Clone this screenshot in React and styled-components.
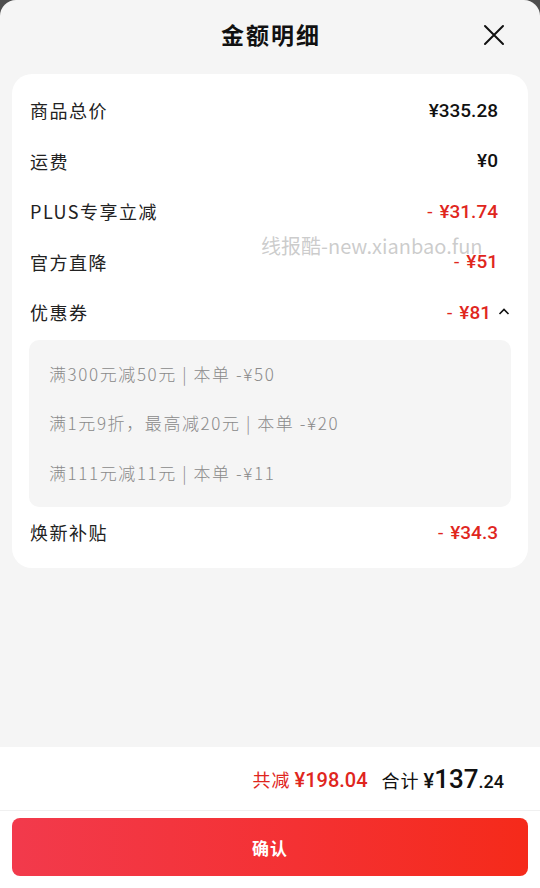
import React from 'react';
import styled, { createGlobalStyle } from 'styled-components';

const GlobalStyle = createGlobalStyle`
  html, body {
    margin: 0;
    padding: 0;
    background: #4d4d4d;
  }
  * {
    box-sizing: border-box;
  }
`;

const Sheet = styled.div`
  position: relative;
  width: 540px;
  height: 888px;
  background: #f5f5f5;
  border-radius: 16px 16px 0 0;
  display: flex;
  flex-direction: column;
  font-family: Roboto, "Noto Sans CJK SC", sans-serif;
  color: #1a1a1a;
  overflow: hidden;
`;

const Header = styled.div`
  position: relative;
  height: 74px;
  display: flex;
  align-items: center;
  justify-content: center;
`;

const Title = styled.div`
  font-family: "Noto Sans CJK SC", sans-serif;
  font-size: 23px;
  font-weight: 700;
  letter-spacing: 2px;
  color: #111;
  margin-top: -6px;
  padding-left: 2px;
`;

const CloseButton = styled.button`
  position: absolute;
  right: 34px;
  top: 23px;
  width: 24px;
  height: 24px;
  padding: 0;
  border: none;
  background: none;
  display: flex;
  align-items: center;
  justify-content: center;
`;

const Card = styled.div`
  margin: 0 12px;
  background: #fff;
  border-radius: 20px;
  padding: 11px 0 10px;
  position: relative;
`;

const Row = styled.div`
  height: 50.5px;
  display: flex;
  align-items: center;
  justify-content: space-between;
  padding: 0 ${({ $caret }) => ($caret ? '17px' : '30px')} 0 18px;
`;

const Label = styled.span`
  font-family: "Noto Sans CJK SC", sans-serif;
  font-size: 18px;
  color: #222;
  letter-spacing: 1.5px;
`;

const Value = styled.span`
  display: flex;
  align-items: center;
  line-height: 1;
  font-family: Roboto, sans-serif;
  font-size: 19px;
  font-weight: 500;
  color: ${({ $red }) => ($red ? '#e0261d' : '#111')};
`;

const Minus = styled.span`
  margin-right: 7px;
  font-weight: 400;
`;

const Caret = styled.svg`
  margin-left: 6px;
`;

const CouponPanel = styled.div`
  margin: 2px 17px 0 17px;
  background: #f5f5f5;
  border-radius: 10px;
  padding: 9px 0 10px 20px;
`;

const CouponLine = styled.div`
  height: 49.5px;
  display: flex;
  align-items: center;
  font-family: "Noto Sans CJK SC", sans-serif;
  font-size: 17px;
  font-weight: 300;
  letter-spacing: 1.6px;
  color: #8a8a8a;
`;

const Watermark = styled.div`
  position: absolute;
  left: 261px;
  top: 236px;
  line-height: 1;
  font-family: "Noto Sans CJK SC", sans-serif;
  font-size: 20px;
  color: rgba(170, 170, 170, 0.6);
  white-space: nowrap;
  pointer-events: none;
`;

const Spacer = styled.div`
  flex: 1;
`;

const Footer = styled.div`
  background: #fff;
`;

const TotalBar = styled.div`
  height: 64px;
  display: flex;
  align-items: center;
  justify-content: flex-end;
  padding-right: 36px;
  border-bottom: 1px solid #f0f0f0;
`;

const Saved = styled.span`
  color: #e0261d;
  font-size: 18px;
  margin-right: 14px;
  display: flex;
  align-items: baseline;
`;

const CnText = styled.span`
  font-family: "Noto Sans CJK SC", sans-serif;
  font-size: 18px;
  letter-spacing: 1px;
  margin-right: 4px;
`;

const SavedAmount = styled.span`
  font-family: Roboto, sans-serif;
  font-weight: 500;
  font-size: 20px;
`;

const Total = styled.span`
  display: flex;
  align-items: baseline;
  color: #111;
`;

const TotalYuan = styled.span`
  font-family: Roboto, sans-serif;
  font-weight: 500;
  font-size: 20px;
`;

const TotalInt = styled.span`
  font-family: Roboto, sans-serif;
  font-weight: 500;
  font-size: 26px;
`;

const TotalDec = styled.span`
  font-family: Roboto, sans-serif;
  font-weight: 500;
  font-size: 18px;
`;

const ButtonBar = styled.div`
  padding: 7px 12px 12px;
`;

const ConfirmButton = styled.button`
  width: 100%;
  height: 58px;
  border: none;
  border-radius: 8px;
  background: linear-gradient(90deg, #f23a4c 0%, #f43133 55%, #f52a1a 100%);
  color: #fff;
  font-family: "Noto Sans CJK SC", sans-serif;
  font-size: 17px;
  font-weight: 700;
  letter-spacing: 1px;
`;

const rows = [
  { label: '商品总价', value: '¥335.28' },
  { label: '运费', value: '¥0' },
  { label: 'PLUS专享立减', value: '¥31.74', red: true },
  { label: '官方直降', value: '¥51', red: true },
];

const coupons = [
  '满300元减50元 | 本单 -¥50',
  '满1元9折，最高减20元 | 本单 -¥20',
  '满111元减11元 | 本单 -¥11',
];

const AmountValue = ({ value, red }) => (
  <Value $red={red}>
    {red && <Minus>-</Minus>}
    {value}
  </Value>
);

const App = () => (
  <>
    <GlobalStyle />
    <Sheet>
      <Header>
        <Title>金额明细</Title>
        <CloseButton aria-label="close">
          <svg width="22" height="22" viewBox="0 0 22 22">
            <path d="M2 2L20 20M20 2L2 20" stroke="#111" strokeWidth="2" strokeLinecap="round" />
          </svg>
        </CloseButton>
      </Header>
      <Card>
        {rows.map((r) => (
          <Row key={r.label}>
            <Label>{r.label}</Label>
            <AmountValue value={r.value} red={r.red} />
          </Row>
        ))}
        <Row $caret>
          <Label>优惠券</Label>
          <Value $red>
            <Minus>-</Minus>¥81
            <Caret width="14" height="14" viewBox="0 0 14 14">
              <path d="M2.5 9L7 4.5L11.5 9" fill="none" stroke="#111" strokeWidth="1.6" />
            </Caret>
          </Value>
        </Row>
        <CouponPanel>
          {coupons.map((c) => (
            <CouponLine key={c}>{c}</CouponLine>
          ))}
        </CouponPanel>
        <Row>
          <Label>焕新补贴</Label>
          <AmountValue value="¥34.3" red />
        </Row>
      </Card>
      <Watermark>线报酷-new.xianbao.fun</Watermark>
      <Spacer />
      <Footer>
        <TotalBar>
          <Saved>
            <CnText>共减</CnText>
            <SavedAmount>¥198.04</SavedAmount>
          </Saved>
          <Total>
            <CnText>合计</CnText>
            <TotalYuan>¥</TotalYuan>
            <TotalInt>137</TotalInt>
            <TotalDec>.24</TotalDec>
          </Total>
        </TotalBar>
        <ButtonBar>
          <ConfirmButton>确认</ConfirmButton>
        </ButtonBar>
      </Footer>
    </Sheet>
  </>
);

export default App;
